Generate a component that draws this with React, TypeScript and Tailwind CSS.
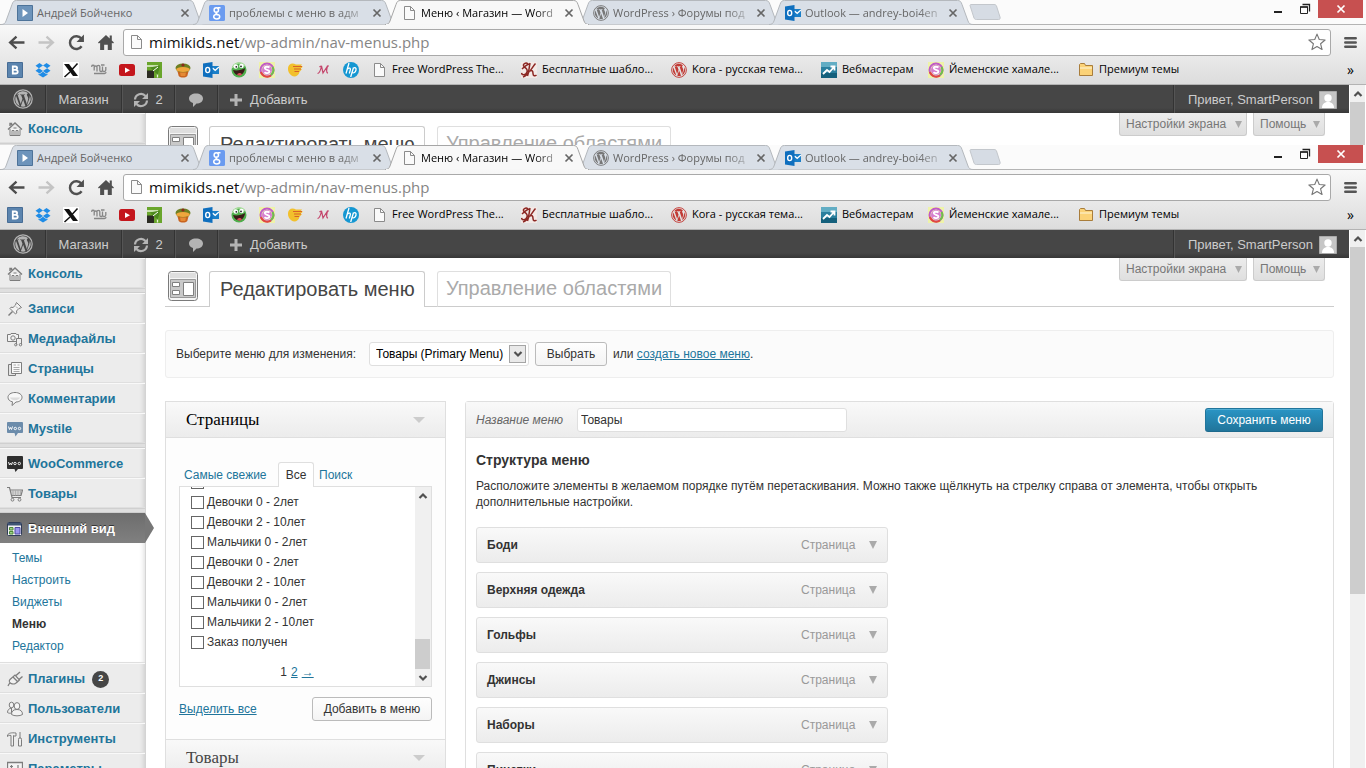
import { useId, type ReactNode } from "react";

type Kids = { children: ReactNode };

/* ---------- small drawing helpers ---------- */

function Icon({ children, className = "size-4", box = "0 0 16 16" }: Kids & { className?: string; box?: string }) {
  return (
    <svg className={"shrink-0 " + className} viewBox={box} fill="none" aria-hidden="true">
      {children}
    </svg>
  );
}

const PageIcon = () => (
  <Icon>
    <path d="M3.5 1.5h6l4 4v9h-10z" fill="#fafafa" stroke="#8b8b8b" />
    <path d="M9.500 1.500v4h4" stroke="#8b8b8b" />
  </Icon>
);

const WordPressMark = ({ className, color }: { className?: string; color: string }) => (
  <Icon className={className} box="0 0 20 20">
    <circle cx="10" cy="10" r="9.200" stroke={color} strokeWidth="1.200" />
    <path
      fill={color}
      d="M2.300 10c0-1.100.25-2.200.68-3.150l3.700 10.100A7.700 7.700 0 0 1 2.300 10zm12.950-.4c0 .7-.27 1.500-.62 2.600l-.8 2.700-2.950-8.750.9-.1c.45-.05.4-.7-.05-.67 0 0-1.330.1-2.180.1-.8 0-2.150-.1-2.150-.1-.45-.03-.5.64-.05.67l.85.1 1.270 3.480-1.780 5.350-2.970-8.830.9-.1c.45-.05.4-.7-.05-.67 0 0-1.150.1-2 .1A7.700 7.700 0 0 1 15.200 4.300c-.95.05-1.330.8-1.330 1.400 0 .7.400 1.280.82 1.960.3.550.56 1.220.56 1.940zm-5.100 1.100 2.370 6.500a7.700 7.700 0 0 1-4.700.1zm6.620-4.300a7.700 7.700 0 0 1-2.900 10.280l2.350-6.800c.5-1.300.65-2.500.55-3.480z"
    />
  </Icon>
);

const PlayTile = () => (
  <Icon>
    <path d="M.5.5h15v15H.5z" fill="#6d94bb" stroke="#4d7399" />
    <path d="M5.500 4v8l5.500-4z" fill="#fff" />
  </Icon>
);

const GoogleTile = () => (
  <Icon>
    <rect width="16" height="16" rx="1.500" fill="#6a9bf0" />
    <g stroke="#fff" strokeWidth="1.500">
      <ellipse cx="7.300" cy="5" rx="2.200" ry="2.300" />
      <ellipse cx="7.700" cy="11.800" rx="3" ry="2.200" />
      <path d="M8.500 2.700h3M8 7.300c-2 .8-.5 1.600.8 2.500" />
    </g>
  </Icon>
);

const OutlookIcon = () => (
  <Icon>
    <path d="M8 4h8v8H8z" fill="#1b7fc8" />
    <path d="m9.500 6 2.700 2.300L16 5" stroke="#fff" strokeWidth="1.300" />
    <path d="M0 1.500 9.500 0v16L0 14.500z" fill="#0f6fbe" />
    <ellipse cx="4.700" cy="8" rx="2" ry="2.600" stroke="#fff" strokeWidth="1.400" />
  </Icon>
);

const SpiralIcon = () => (
  <Icon>
    <path d="M0 0h16v16H0z" fill="#eef3a8" />
    <circle cx="8" cy="8" r="6.500" stroke="#c05ac8" strokeWidth="2" />
    <path d="M2 10a6.500 6.500 0 0 0 10 3.500" stroke="#e2483d" strokeWidth="2" />
    <path d="M13.500 5A6.500 6.500 0 0 1 12 13" stroke="#6fc04a" strokeWidth="2" />
    <circle cx="8" cy="8" r="5" fill="#d67fd0" />
    <path d="M10.500 5.500C9 4.300 5.700 4.400 5.800 6.300c.1 1.700 4.600 1.300 4.600 3.200 0 1.900-3.300 2.200-5 .8" stroke="#fff" strokeWidth="1.900" />
  </Icon>
);

const FolderIcon = () => (
  <Icon>
    <path d="M1.500 13.500v-11l1-1h4l1 2h7v10z" fill="#fbd277" stroke="#a97d3b" />
    <path d="M2 6h12" stroke="#fdeab8" strokeWidth="1.500" />
  </Icon>
);

/* ---------- browser chrome data ---------- */

const tabs = [
  { title: "Андрей Бойченко", icon: <PlayTile /> },
  { title: "проблемы с меню в адм", icon: <GoogleTile />, fade: true },
  { title: "Меню ‹ Магазин — Word", icon: <PageIcon />, active: true, fade: true },
  { title: "WordPress › Форумы под", icon: <WordPressMark className="size-4" color="#777" />, fade: true },
  { title: "Outlook — andrey-boi4en", icon: <OutlookIcon />, fade: true },
];

const quickLinks: { name: string; icon: ReactNode }[] = [
  {
    name: "ВКонтакте",
    icon: (
      <Icon>
        <path d="M.5.5h15v15H.5z" fill="#5b84ae" stroke="#466c95" />
        <path d="M5.800 4.500h2.500c2.400 0 2.400 3.200 0 3.300H6h2.600c2.800 0 2.800 3.700 0 3.700H5.800z" stroke="#fff" strokeWidth="1.800" />
      </Icon>
    ),
  },
  {
    name: "Dropbox",
    icon: (
      <Icon>
        <path d="M4.500 1 8 3.600 3.900 6.300.5 3.700zM11.500 1l4 2.700-3.400 2.600L8 3.600zM.5 8.800l3.400-2.500L8 8.900l-3.500 2.600zM15.500 8.800l-3.400-2.500L8 8.900l3.500 2.600zM8 9.700l3.500 2.600 1-.7v1.200L8 15.500l-4.500-2.700v-1.200l1 .7z" fill="#1f8ce6" />
      </Icon>
    ),
  },
  {
    name: "X",
    icon: (
      <Icon>
        <path d="M0 0h16v16H0z" fill="#fff" />
        <path d="M1 2h5l9 12h-5z" fill="#111" />
        <path d="M14.500 1.500 9 7.500M7 10l-5.500 5" stroke="#111" strokeWidth="1.500" />
      </Icon>
    ),
  },
  {
    name: "mi",
    icon: (
      <Icon>
        <path d="M.8 5V4c0-1 2.400-1 2.400 0v4.500M3.200 5.500c0-2 2.800-2 2.800 0v4M6 4.500C6 3 8.800 3 8.800 4.500v3.800c0 1.600 2.700 1.600 2.700 0V4.500M11.500 8c0 2 3.300 2 3.300 0V5M3 11.500h10.500c1 0 1.500-.7 1.500-1.500M10 3h3.500" stroke="#868686" strokeWidth="1.300" />
      </Icon>
    ),
  },
  {
    name: "YouTube",
    icon: (
      <Icon>
        <rect y="2" width="16" height="12" rx="2.500" fill="#c4161c" />
        <path d="M6 5.500v5.500l5-2.700z" fill="#fff" />
      </Icon>
    ),
  },
  {
    name: "ПриватБанк",
    icon: (
      <Icon>
        <path d="M0 0h15v16H0z" fill="#69a52b" />
        <path d="M0 4h10.500v11.500" stroke="#e8f3da" strokeWidth="1.300" />
        <path d="M0 8.500h7v7.500H0z" fill="#2b2b22" />
        <path d="M3 5.500 13 3.500 11 13z" fill="#4d8a1f" />
        <path d="m11 5-5 4" stroke="#fff" />
      </Icon>
    ),
  },
  {
    name: "Кекс",
    icon: (
      <Icon>
        <path d="M2 7.500h12L12.300 14c-2 2-6.600 2-8.600 0z" fill="#c9641f" />
        <ellipse cx="8" cy="6" rx="7.500" ry="4.500" fill="#6d7f22" />
        <ellipse cx="8" cy="7.500" rx="6.800" ry="2.600" fill="#efa63c" />
        <path d="M5 10.500h6l-.7 3.500H5.700z" fill="#e58a35" />
        <circle cx="8" cy="3" r="1.600" fill="#8b2a1a" />
      </Icon>
    ),
  },
  { name: "Outlook", icon: <OutlookIcon /> },
  {
    name: "Смайл",
    icon: (
      <Icon>
        <circle cx="8" cy="8" r="7.500" fill="#4fae4c" />
        <path d="M1.500 6A7 7 0 0 1 14 4" stroke="#a8dd9b" strokeWidth="1.500" />
        <circle cx="4.800" cy="4.500" r="2.300" fill="#fff" />
        <circle cx="10.500" cy="4" r="2.300" fill="#fff" />
        <circle cx="5.300" cy="4.800" r=".9" fill="#222" />
        <circle cx="10" cy="4.400" r=".9" fill="#222" />
        <path d="M2 8c3.500 1 9 0 12-2-.5 8.500-10 10-12 2z" fill="#3a1b18" />
        <path d="M6 12.500c1.500-2 4-2 5 0-1.500 1.500-3.500 1.500-5 0z" fill="#d9485a" />
      </Icon>
    ),
  },
  { name: "Спираль", icon: <SpiralIcon /> },
  {
    name: "Птица",
    icon: (
      <Icon>
        <path d="M1 6C1.500 2 5 .5 9 2.500h6l-1.500 2H16L13.500 7H15l-2.500 3c-1 4-5 6-8 3.500C2 12 .7 9 1 6z" fill="#f2c02c" />
        <path d="M6 4.500h9M7 7h7M7.500 9.500H12" stroke="#d8632a" strokeWidth="1.100" />
      </Icon>
    ),
  },
  {
    name: "M",
    icon: (
      <Icon>
        <path d="M2.500 11.500c1.500 0 3-2.500 4-7.500l1.500 7 4.500-7c-1 3.500-1.500 7 .5 7.200M4.500 5c.8-.8 1.500-1 2-1M12 4h2" stroke="#c4456b" strokeWidth="1.200" />
      </Icon>
    ),
  },
  {
    name: "HP",
    icon: (
      <Icon>
        <circle cx="8" cy="8" r="8" fill="#1597d2" />
        <path d="M6 1 3 11.500M4.500 7c1.500-1.300 3.300-1 2.800.8l-1 3.700M10.500 5.500 7.700 15M10 6.500c2-1.500 3.500-.8 3 1.500-.5 2.500-2.300 3.300-4 2.500" stroke="#fff" strokeWidth="1.300" />
      </Icon>
    ),
  },
];

const bookmarks: { title: string; width: string; icon: ReactNode }[] = [
  { title: "Free WordPress The...", width: "w-[150px]", icon: <PageIcon /> },
  {
    title: "Бесплатные шабло...",
    width: "w-[150px]",
    icon: (
      <Icon>
        <path d="M0 0h16v16H0z" fill="#f3e9e6" />
        <path d="M7 2C5 0 1 2 3 4.500s4 2 3 5.500-5 3.500-5.500 1M9 1c-1 5-1 9-2.500 13M14.500 1.500C13 3 10 8 9 9c2-1 3 0 3 2.500s2 3 3.500 1.500M1 7c3-3 5-5 8-5M2 15c3-1 5-3 6.500-6" stroke="#8c2723" strokeWidth="1.500" />
      </Icon>
    ),
  },
  { title: "Kora - русская тема...", width: "w-[150px]", icon: <WordPressMark className="size-4" color="#c23b35" /> },
  {
    title: "Вебмастерам",
    width: "w-[107px]",
    icon: (
      <Icon>
        <path d="M0 0h16v16H0z" fill="#2a7f9e" />
        <path d="M0 0h16v5H0z" fill="#62adc4" />
        <path d="M0 11h16v5H0z" fill="#14607c" />
        <path d="m2 12 4-4 2.500 2L13 5M9.500 4.500h4v4" stroke="#fff" strokeWidth="1.800" />
      </Icon>
    ),
  },
  { title: "Йеменские хамале...", width: "w-[150px]", icon: <SpiralIcon /> },
  { title: "Премиум темы", width: "w-[120px]", icon: <FolderIcon /> },
];

/* ---------- browser chrome ---------- */

function Tab({ title, icon, active, fade }: { title: string; icon: ReactNode; active?: boolean; fade?: boolean }) {
  return (
    <div className={"relative -mr-3 flex h-[25px] w-[204px] shrink-0 items-center pt-px pr-[15px] pl-4 " + (active ? "z-10" : "")}>
      <svg className="absolute inset-0 size-full" viewBox="0 0 204 25" preserveAspectRatio="none" fill="none" aria-hidden="true">
        <path
          d="M0 24.500c3 0 4-1 5-3.500L11 4.500C12 1.500 13 .5 15.500 .5h173c2.500 0 3.500 1 4.500 4L199 21c1 2.500 2 3.500 5 3.500"
          fill={active ? "#f8f8f8" : "#d9dfe7"}
          stroke={active ? "#a6a6a6" : "#b4b8bd"}
        />
        {active && <path d="M1 24.500h202" stroke="#f7f7f7" />}
      </svg>
      <a
        href="#tab"
        className={"relative flex min-w-0 flex-1 items-center gap-1 leading-4 " + (active ? "text-black" : "text-[#666]")}
      >
        {icon}
        <span className={"whitespace-nowrap " + (fade ? "[mask-image:linear-gradient(to_right,#000_86%,#0006)]" : "")}>{title}</span>
      </a>
      <button type="button" aria-label="Закрыть вкладку" className="relative size-2.5 shrink-0">
        <Icon className="size-2.5" box="0 0 10 10">
          <path d="m1.500 1.500 7 7m0-7-7 7" stroke="#666" strokeWidth="1.700" />
        </Icon>
      </button>
    </div>
  );
}

function TabStrip() {
  return (
    <div className="flex h-[25px] items-end border-b border-[#b4b4b4] bg-[#fbfbfb] pl-px text-[11px]">
      <div className="-mb-px flex">
        {tabs.map((t) => (
          <Tab key={t.title} {...t} />
        ))}
      </div>
      <button type="button" aria-label="Новая вкладка" className="mb-1 ml-2 h-4 w-8">
        <Icon className="h-4 w-8" box="0 0 32 16">
          <path d="M1 1.500C1 .8 1.500.5 2 .5h23c1.500 0 2 .5 2.500 1.500l3.500 11c.5 1.500 0 2.500-1.500 2.500h-22c-1.500 0-2-.5-2.500-1.500z" fill="#d6dce4" stroke="#c3c7cc" />
        </Icon>
      </button>
      <div className="mr-[3px] ml-auto flex h-[25px] items-start">
        <button type="button" aria-label="Свернуть" className="flex h-[22px] w-[26px] items-center justify-center">
          <Icon className="size-3" box="0 0 12 12">
            <path d="M2 8h8" stroke="#222" strokeWidth="2" />
          </Icon>
        </button>
        <button type="button" aria-label="Развернуть" className="flex h-[19px] w-[27px] items-center justify-center">
          <Icon className="size-3" box="0 0 12 12">
            <path d="M1.500 4h7v6.500h-7z" stroke="#222" />
            <path d="M1 4h8M3.500 1.500h7v7" stroke="#222" strokeWidth="1.300" />
          </Icon>
        </button>
        <button type="button" aria-label="Закрыть" className="flex h-[19px] w-[45px] items-center justify-center bg-[#c75050]">
          <Icon className="size-2.5" box="0 0 10 10">
            <path d="m1.500 1.500 7 7m0-7-7 7" stroke="#fff" strokeWidth="1.700" />
          </Icon>
        </button>
      </div>
    </div>
  );
}

function Toolbar({ id }: { id: string }) {
  return (
    <div className="flex h-8 items-center pt-0.5 pr-2 pl-2">
      <div className="flex w-[115px] gap-[13px]">
        <button type="button" aria-label="Назад">
          <Icon className="size-[17px]">
            <path d="M15.500 8H2.500M8 2.500 2 8l6 5.500" stroke="#4d4d4d" strokeWidth="2.200" />
          </Icon>
        </button>
        <button type="button" aria-label="Вперёд">
          <Icon className="size-[17px]">
            <path d="M.5 8h13M8 2.500 14 8l-6 5.500" stroke="#c4c4c4" strokeWidth="2.200" />
          </Icon>
        </button>
        <button type="button" aria-label="Обновить">
          <Icon className="size-[17px]">
            <path d="M12.800 11.500A6 6 0 1 1 12.500 4.300" stroke="#505050" strokeWidth="2.300" />
            <path d="M15 .5v7H8z" fill="#505050" />
          </Icon>
        </button>
        <button type="button" aria-label="Домой">
          <Icon className="size-[17px]">
            <path d="M7.500 1 0 8l.8 1L2 8.200V15h3.800v-5h3.400v5H13V8.200l1.200.8.800-1-2-2V1.500h-2v2.700z" fill="#505050" />
          </Icon>
        </button>
      </div>
      <div className="flex h-[27px] min-w-0 flex-1 items-center rounded-[3px] border border-[#a9a9a9] bg-white pr-1 pl-1">
        <PageIcon />
        <label htmlFor={id + "url"} className="sr-only">
          Адрес
        </label>
        <div className="relative ml-[5px] flex h-6 flex-1 items-center text-[15px]">
          <span aria-hidden="true" className="pointer-events-none whitespace-pre text-[#858585]">
            <span className="text-[#111]">mimikids.net</span>/wp-admin/nav-menus.php
          </span>
          <input
            id={id + "url"}
            type="url"
            className="absolute inset-0 size-full bg-transparent text-transparent outline-none"
          />
        </div>
        <button type="button" aria-label="В закладки">
          <Icon className="size-[18px]">
            <path d="m8 1 2 4.800 5.200.4-4 3.400 1.300 5.100L8 12l-4.500 2.700 1.300-5.100-4-3.400L6 5.800z" stroke="#777" strokeLinejoin="round" />
          </Icon>
        </button>
      </div>
      <button type="button" aria-label="Меню браузера" className="ml-3">
        <Icon className="size-[15px]">
          <path d="M2.500 3.500h11M2.500 8h11M2.500 12.500h11" stroke="#555" strokeWidth="2.800" strokeLinecap="round" />
        </Icon>
      </button>
    </div>
  );
}

function BookmarksBar() {
  return (
    <nav className="flex h-[28px] items-center border-b border-[#b3b3b3] pr-3 pb-0.5 pl-[7px] text-[11px] text-black">
      <div className="flex w-[364px] shrink-0 gap-3">
        {quickLinks.map((q, i) => (
          <a key={i} href="#bookmark" aria-label={q.name}>
            {q.icon}
          </a>
        ))}
      </div>
      {bookmarks.map((b) => (
        <a key={b.title} href="#bookmark" className={"flex shrink-0 items-center gap-[5px] whitespace-nowrap " + b.width}>
          {b.icon}
          {b.title}
        </a>
      ))}
      <button type="button" className="ml-auto text-[14px]">
        »
      </button>
    </nav>
  );
}

/* ---------- WordPress admin ---------- */

const divider = "border-r border-[#333] shadow-[1px_0_0_#555]";

function AdminBar() {
  return (
    <div className="flex h-7 items-stretch bg-[linear-gradient(to_top,#373737_0,#464646_5px)] text-[13px] text-[#ccc]">
      <a href="#wp" aria-label="О WordPress" className={"flex w-[46px] items-center justify-center " + divider}>
        <WordPressMark className="size-5" color="#b4b4b4" />
      </a>
      <a href="#site" className={"flex w-[76px] items-center justify-center pt-0.5 " + divider}>
        Магазин
      </a>
      <a href="#updates" className={"flex w-[53px] items-center justify-center gap-1.5 pt-0.5 " + divider}>
        <Icon>
          <path d="M2 7.500A6 6 0 0 1 12.500 4M14 8.500A6 6 0 0 1 3.500 12" stroke="#b4b4b4" strokeWidth="2.200" />
          <path d="M15 1v6H9zM1 15V9h6z" fill="#b4b4b4" />
        </Icon>
        2
      </a>
      <a href="#comments" aria-label="Комментарии" className={"flex w-[43px] items-center justify-center pt-0.5 " + divider}>
        <Icon>
          <path d="M8 1.500c4 0 7 2 7 5s-2.800 5-6.500 5L5 15v-4C2.500 10.300 1 8.700 1 6.500c0-3 3-5 7-5z" fill="#b4b4b4" />
        </Icon>
      </a>
      <a href="#new" className="flex items-center gap-2 pt-0.5 pl-3">
        <Icon className="size-3" box="0 0 12 12">
          <path d="M6 0v12M0 6h12" stroke="#b4b4b4" strokeWidth="3" />
        </Icon>
        Добавить
      </a>
      <a
        href="#profile"
        className="ml-auto flex w-[175px] items-center justify-end gap-1.5 border-l border-[#555] pt-0.5 pr-3 shadow-[-1px_0_0_#333]"
      >
        Привет, SmartPerson
        <Icon className="size-[18px]" box="0 0 18 18">
          <path d="M.5.5h17v17H.5z" fill="#c6c6c6" stroke="#aaa" />
          <circle cx="9" cy="7" r="3.700" fill="#fff" />
          <path d="M3 17c0-4 2-5.500 6-6.500 4 1 6 2.500 6 6.500z" fill="#fff" />
        </Icon>
      </a>
    </div>
  );
}

const g = "#7d7d7d";

const menuIcons = {
  home: (
    <Icon>
      <path d="M3 8v6.500h10V8" fill="#f6f6f6" stroke={g} />
      <path d="M1 8.500 8 2l7 6.500M3 5V2.500h1.500V4" stroke={g} strokeWidth="1.400" />
      <path d="M5 14V9.500h2V14M9 14V9.500h2V14M6.500 7h3" stroke={g} />
    </Icon>
  ),
  pin: (
    <Icon>
      <path d="m9.500 1.500 5 5-1.500.7-1 .2L9.500 10l.3 2-1.300 1L3 7.500 4 6.200l2 .3L8.600 4l.2-1z" fill="#f3f3f3" stroke={g} />
      <path d="m5.500 10.500-4 4" stroke={g} strokeWidth="1.400" />
      <path d="m9 5.500 2 2" stroke="#aaa" />
    </Icon>
  ),
  media: (
    <Icon>
      <path d="M.5 3.500h3l.5-1h5l.5 1h2v7H.5z" fill="#f3f3f3" stroke={g} />
      <circle cx="6" cy="7" r="2.200" stroke={g} />
      <path d="M9.500 13.500V7.500h5v6" fill="#eee" stroke={g} />
      <circle cx="8.800" cy="13.700" r="1.200" stroke={g} />
      <circle cx="13.500" cy="13.700" r="1.200" stroke={g} />
    </Icon>
  ),
  pages: (
    <Icon>
      <path d="M1.500 3.500h7v11h-7z" fill="#e4e4e4" stroke={g} />
      <path d="M4.500 1.500h10v11h-10z" fill="#f8f8f8" stroke={g} />
      <path d="M6.500 4h2.500M10.500 4h2M6.500 6.500h6M6.500 8.500h6M6.500 10.500h6" stroke="#aaa" />
    </Icon>
  ),
  comment: (
    <Icon>
      <path d="M8 1.500c4 0 7 2 7 4.800s-2.800 4.700-6 4.700L5 14.500l.5-3.700C2.800 10.300 1 8.700 1 6.300c0-2.800 3-4.800 7-4.800z" fill="#f7f7f7" stroke={g} />
      <path d="M3 6.500c1 3.500 9 3.500 10 0z" fill="#dcdcdc" />
    </Icon>
  ),
  woo: (
    <Icon>
      <path d="M1 1h14c.5 0 1 .5 1 1v9c0 .5-.5 1-1 1h-4L8.500 15.500 7.500 12H1c-.5 0-1-.5-1-1V2c0-.5.5-1 1-1z" fill="#6c8cab" />
      <path d="m1.500 5.500 1 3 1-2 1 2 1-3M9.500 7.500a1.200 1.200 0 1 0-2.400 0 1.200 1.200 0 0 0 2.400 0zM13.700 7.500a1.200 1.200 0 1 0-2.400 0 1.200 1.200 0 0 0 2.400 0z" stroke="#fff" />
    </Icon>
  ),
  wooDark: (
    <Icon>
      <path d="M1 0h14c.5 0 1 .5 1 1v11c0 .5-.5 1-1 1h-4l-2.500 3-1-3H1c-.5 0-1-.5-1-1V1c0-.5.5-1 1-1z" fill="#2e2e2e" />
      <path d="m1.500 6 1 3 1-2 1 2 1-3M9.200 7.500a1.200 1.200 0 1 0-2.400 0 1.200 1.200 0 0 0 2.400 0zM13.500 7.500a1.200 1.200 0 1 0-2.400 0 1.200 1.200 0 0 0 2.400 0z" stroke="#eee" />
    </Icon>
  ),
  cart: (
    <Icon>
      <path d="M0 1.500h2.500L5 11.500h9M3 4h12.500L14 9.500H4.500" stroke={g} strokeWidth="1.200" />
      <path d="M4 6h10.500M4.500 8h9.500M6 4v5.500M8.500 4v5.500M11 4v5.500M13.500 4v5" stroke="#aaa" strokeWidth=".8" />
      <circle cx="5.500" cy="13.700" r="1.400" stroke={g} />
      <circle cx="12.500" cy="13.700" r="1.400" stroke={g} />
    </Icon>
  ),
  look: (
    <Icon>
      <rect x=".5" y="1.500" width="14" height="13" rx="1" fill="#f2f2f2" stroke="#2f3c58" />
      <path d="M1 2h13v2.500H1z" fill="#3f5474" />
      <path d="M2.500 6.500h3.500v2.500h-3.500zM2.500 10.500h3.500v2.500h-3.500z" fill="#9fd08a" stroke="#4c8a38" />
      <path d="M8 6.500h5v6.500h-5z" fill="#9a94ee" stroke="#4e4aa0" />
    </Icon>
  ),
  plug: (
    <Icon>
      <path d="M1 15c1-2 1-2.500 2.500-3.500M3 8.500 8 4l4.500 5-4 3.500c-2 1-5 .5-6-1.500-.4-1 0-2 .5-2.500z" fill="#f1f1f1" stroke={g} strokeWidth="1.200" />
      <path d="m9 4.500 4-3.500M12 8.500l3.500-3M6 6l5 5" stroke={g} strokeWidth="1.400" />
    </Icon>
  ),
  users: (
    <Icon>
      <ellipse cx="4.500" cy="4" rx="2.300" ry="2.800" fill="#f2f2f2" stroke={g} />
      <path d="M4.500 7C2 7.500.5 9 .5 11.500c1.500 1 3 .8 4 .5z" fill="#eee" stroke={g} />
      <ellipse cx="10" cy="5" rx="2.800" ry="3.400" fill="#f6f6f6" stroke={g} />
      <path d="M4.500 13.500c0-3.500 2-5 5.500-5s5.500 1.500 5.500 5c-2.500 1.800-8.500 1.800-11 0z" fill="#f2f2f2" stroke={g} />
    </Icon>
  ),
  tools: (
    <Icon>
      <path d="M.5 4C2 2 4 1.500 9 2v3H7l-.5-.5V15H4V4.500c-1.500-.5-2.500 0-3.500 1z" fill="#eee" stroke={g} />
      <path d="M13 1v6M11.500 15V8.500l.5-1.500h2l.5 1.500V15z" fill="#eee" stroke={g} />
    </Icon>
  ),
  settings: (
    <Icon>
      <path d="M.5 1.500h15v14H.5z" fill="#f4f4f4" stroke={g} strokeWidth="1.300" />
      <path d="M4.500 4v9M3 5.500h3M3 10h3M11 4v9M9.500 7.500h3M9 11h4" stroke={g} strokeWidth="1.200" />
    </Icon>
  ),
};

type MenuEntry = { label: string; icon: ReactNode; count?: number };

const topGroups: MenuEntry[][] = [
  [{ label: "Консоль", icon: menuIcons.home }],
  [
    { label: "Записи", icon: menuIcons.pin },
    { label: "Медиафайлы", icon: menuIcons.media },
    { label: "Страницы", icon: menuIcons.pages },
    { label: "Комментарии", icon: menuIcons.comment },
    { label: "Mystile", icon: menuIcons.woo },
  ],
  [
    { label: "WooCommerce", icon: menuIcons.wooDark },
    { label: "Товары", icon: menuIcons.cart },
  ],
];

const lowerGroup: MenuEntry[] = [
  { label: "Плагины", icon: menuIcons.plug, count: 2 },
  { label: "Пользователи", icon: menuIcons.users },
  { label: "Инструменты", icon: menuIcons.tools },
  { label: "Параметры", icon: menuIcons.settings },
];

const submenu = ["Темы", "Настроить", "Виджеты", "Меню", "Редактор"];

function SidebarItem({ label, icon, count }: MenuEntry) {
  return (
    <li>
      <a
        href="#admin"
        className="flex h-[30px] items-center gap-[5px] border-t border-b border-t-[#f9f9f9] border-b-[#dfdfdf] pt-0.5 pl-[7px] font-bold text-[#21759b]"
      >
        {icon}
        {label}
        {count && (
          <span className="ml-0.5 flex size-[17px] items-center justify-center rounded-full bg-[#464646] text-[9px] text-white">{count}</span>
        )}
      </a>
    </li>
  );
}

function Sidebar() {
  return (
    <nav className="w-[146px] shrink-0 border-r border-[#d4d4d4] bg-[#ececec] text-[13px] shadow-[inset_-5px_0_5px_-4px_rgba(0,0,0,0.15)]">
      {topGroups.map((group, i) => (
        <div key={i}>
          <ul>
            {group.map((m) => (
              <SidebarItem key={m.label} {...m} />
            ))}
          </ul>
          <div className="h-[5px] border-t border-b border-t-[#d0d0d0] border-b-[#cfcfcf] bg-[#dfdfdf]" />
        </div>
      ))}
      <a
        href="#appearance"
        className="relative flex h-[30px] items-center gap-[5px] bg-linear-to-b from-[#6d6d6d] to-[#808080] pt-0.5 pl-[7px] font-bold text-white [text-shadow:0_-1px_0_#333]"
      >
        {menuIcons.look}
        Внешний вид
        <svg className="absolute top-0 left-full h-[30px] w-[9px]" viewBox="0 0 9 30" aria-hidden="true">
          <path d="M0 0 9 15 0 30z" fill="#777" />
        </svg>
      </a>
      <ul className="h-[119px] bg-white pt-1 pl-3 text-[12px] leading-[22px] shadow-[inset_-5px_0_5px_-4px_rgba(0,0,0,0.15)]">
        {submenu.map((s) => (
          <li key={s}>
            <a href="#sub" className={s === "Меню" ? "font-bold text-[#333]" : "text-[#21759b]"}>
              {s}
            </a>
          </li>
        ))}
      </ul>
      <ul className="border-t border-[#dfdfdf]">
        {lowerGroup.map((m) => (
          <SidebarItem key={m.label} {...m} />
        ))}
      </ul>
    </nav>
  );
}

const Triangle = ({ className = "size-2" }: { className?: string }) => (
  <svg className={"shrink-0 " + className} viewBox="0 0 8 8" preserveAspectRatio="none" aria-hidden="true">
    <path d="M0 0h8L4 8z" fill="currentColor" />
  </svg>
);

const Chevron = ({ up = false, className = "size-2.5" }: { up?: boolean; className?: string }) => (
  <Icon className={className} box="0 0 10 10">
    <path d={up ? "M1.500 7 5 3.500 8.500 7" : "M1.500 3 5 6.500 8.500 3"} stroke="#505050" strokeWidth="2.200" />
  </Icon>
);

function ScreenMetaButton({ children, width }: Kids & { width: string }) {
  return (
    <button
      type="button"
      className={
        "flex h-[23px] items-center justify-between rounded-b-[3px] border border-t-0 border-[#ccc] bg-linear-to-b from-[#ececec] to-[#dfdfdf] pr-1 pl-1.5 text-[12px] text-[#777] " +
        width
      }
    >
      {children}
      <Triangle className="size-[7px] text-[#aaa]" />
    </button>
  );
}

function PageHeader() {
  return (
    <header className="flex h-[49px] items-end border-b border-[#ccc] pl-[3px]">
      <Icon className="mb-1 size-[31px]" box="0 0 31 31">
        <rect x=".5" y=".5" width="29" height="29" rx="3" fill="#f5f5f5" stroke="#7a7a7a" />
        <path d="M2 2h26v5H2z" fill="#dedede" />
        <path d="M2.500 8.500h25v18h-25z" fill="#c9c9c9" stroke="#999" />
        <path d="M4.500 11.500h7v4h-7zM4.500 19.500h7v4h-7zM15.500 11.500h10v13h-10z" fill="#fff" stroke="#808080" />
      </Icon>
      <h1 className="ml-[10px] -mb-px flex h-9 w-[216px] items-center rounded-t-[3px] border border-b-0 border-[#ccc] bg-white pb-0.5 pl-2.5 text-[20px] whitespace-nowrap text-[#464646]">
        Редактировать меню
      </h1>
      <a
        href="#locations"
        className="ml-3 -mb-px flex h-9 w-[234px] items-center justify-center rounded-t-[3px] border border-[#dfdfdf] border-b-[#ccc] pb-0.5 text-[20px] whitespace-nowrap text-[#aaa]"
      >
        Управление областями
      </a>
      <div className="mr-[9px] ml-auto flex gap-1.5 self-start">
        <ScreenMetaButton width="w-[128px]">Настройки экрана</ScreenMetaButton>
        <ScreenMetaButton width="w-[72px]">Помощь</ScreenMetaButton>
      </div>
    </header>
  );
}

const button = "h-6 rounded-[3px] border border-[#bbb] bg-linear-to-b from-[#fefefe] to-[#f4f4f4] text-[12px] text-[#333]";

function MenuChooser({ id }: { id: string }) {
  return (
    <form className="mt-[23px] flex h-12 items-center rounded-[3px] border border-[#eee] bg-[#fbfbfb] px-2.5">
      <label htmlFor={id + "menu"} className="w-[193px]">
        Выберите меню для изменения:
      </label>
      <div className="relative w-[160px]">
        <select id={id + "menu"} className="h-6 w-full appearance-none rounded-[3px] border border-[#dfdfdf] bg-white pl-1.5 text-[12px] text-black">
          <option>Товары (Primary Menu)</option>
        </select>
        <span className="pointer-events-none absolute top-[3px] right-[3px] flex h-[18px] w-[17px] items-center justify-center border border-[#a5a5a5] bg-[#e9e9e9]">
          <Chevron />
        </span>
      </div>
      <button type="button" className={"mr-1.5 ml-1.5 w-[72px] " + button}>
        Выбрать
      </button>
      <span>
        или{" "}
        <a href="#create" className="text-[#21759b] underline">
          создать новое меню
        </a>
        .
      </span>
    </form>
  );
}

const pages = [
  "Мальчики 2 - 10лет",
  "Девочки 0 - 2лет",
  "Девочки 2 - 10лет",
  "Мальчики 0 - 2лет",
  "Девочки 0 - 2лет",
  "Девочки 2 - 10лет",
  "Мальчики 0 - 2лет",
  "Мальчики 2 - 10лет",
  "Заказ получен",
];

const bar = "bg-linear-to-b from-[#f9f9f9] to-[#ececec]";

function SectionTitle({ children, open }: Kids & { open?: boolean }) {
  return (
    <h3 className={"flex h-9 items-center justify-between border-b border-[#dfdfdf] pr-5 pl-5 " + bar}>
      <button type="button" className={"font-['Liberation_Serif',Georgia,serif] text-[17px] " + (open ? "text-black" : "text-[#464646]")}>
        {children}
      </button>
      <Triangle className="h-1.5 w-3 text-[#ccc]" />
    </h3>
  );
}

function PagesBox() {
  return (
    <section className="w-[281px] shrink-0 self-start border border-[#dfdfdf] bg-[#fdfdfd]">
      <SectionTitle open>Страницы</SectionTitle>
      <div className="px-[13px] pt-6 pb-[18px]">
        <div className="flex h-[25px] items-center text-[#21759b]">
          <a href="#recent" className="w-[99px] pl-[5px]">
            Самые свежие
          </a>
          <a
            href="#all"
            className="relative z-10 flex h-[25px] w-9 items-center justify-center rounded-t-[3px] border border-b-0 border-[#dfdfdf] bg-white text-[#333]"
          >
            Все
          </a>
          <a href="#search" className="px-[5px]">
            Поиск
          </a>
        </div>
        <div className="-mt-px flex h-[201px] border border-[#dfdfdf] bg-white">
          <div className="flex min-w-0 flex-1 flex-col justify-end overflow-hidden pb-1 pl-[11px]">
            {pages.map((p, i) => (
              <label key={i} className="flex h-5 shrink-0 items-center gap-[3px]">
                <input type="checkbox" className="size-[13px] appearance-none border border-[#666] bg-white" />
                {p}
              </label>
            ))}
            <div className="mt-2.5 flex h-5 shrink-0 items-center justify-center gap-1 pr-3">
              <span>1</span>
              <a href="#p2" className="text-[#21759b] underline">
                2
              </a>
              <a href="#next" className="text-[#21759b] underline">
                →
              </a>
            </div>
          </div>
          <div className="flex w-4 shrink-0 flex-col items-center bg-[#f0f0f0]">
            <span className="flex h-[17px] items-center">
              <Chevron up />
            </span>
            <span className="mt-auto h-[30px] w-[15px] self-start bg-[#cdcdcd]" />
            <span className="flex h-[17px] items-center">
              <Chevron />
            </span>
          </div>
        </div>
        <div className="mt-2.5 flex items-center justify-between">
          <a href="#select-all" className="text-[#21759b] underline">
            Выделить все
          </a>
          <button type="button" className={"w-[120px] " + button}>
            Добавить в меню
          </button>
        </div>
      </div>
      <div className="border-t border-[#dfdfdf]">
        <SectionTitle>Товары</SectionTitle>
      </div>
    </section>
  );
}

const structure = ["Боди", "Верхняя одежда", "Гольфы", "Джинсы", "Наборы", "Пинетки"];

function MenuEditor({ id }: { id: string }) {
  return (
    <section className="min-w-0 flex-1 rounded-t-[3px] border border-[#dfdfdf] bg-white">
      <div className={"flex h-9 items-center border-b border-[#dfdfdf] px-2.5 " + bar}>
        <label htmlFor={id + "name"} className="w-[101px] text-[#666] italic">
          Название меню
        </label>
        <input
          id={id + "name"}
          defaultValue="Товары"
          className="h-6 w-[270px] rounded-[3px] border border-[#dfdfdf] bg-white px-[3px] text-[12px] text-[#333]"
        />
        <button
          type="button"
          className="ml-auto h-6 w-[118px] rounded-[3px] border border-[#21759b] border-b-[#1e6a8d] bg-linear-to-b from-[#2a95c5] to-[#21759b] text-[12px] text-white shadow-[inset_0_1px_0_rgba(120,200,230,0.5)]"
        >
          Сохранить меню
        </button>
      </div>
      <div className="px-2.5 pt-3.5">
        <h2 className="text-[14px] leading-4 font-bold">Структура меню</h2>
        <p className="mt-2.5 leading-4">
          Расположите элементы в желаемом порядке путём перетаскивания. Можно также щёлкнуть на стрелку справа от элемента, чтобы открыть
          дополнительные настройки.
        </p>
        <ul className="mt-[17px] flex w-[412px] flex-col gap-[9px]">
          {structure.map((s) => (
            <li key={s} className={"flex h-9 items-center rounded-[3px] border border-[#dfdfdf] px-2.5 " + bar}>
              <span className="flex-1 font-bold">{s}</span>
              <span className="w-[68px] text-[#999]">Страница</span>
              <Triangle className="size-2 text-[#aaa]" />
            </li>
          ))}
        </ul>
      </div>
    </section>
  );
}

function BrowserWindow() {
  const id = useId();
  return (
    <div className="flex min-h-full flex-col bg-white">
      <div className="font-['Open_Sans','Noto_Sans',sans-serif]">
        <TabStrip />
        <div className="bg-linear-to-b from-[#f8f8f8] to-[#dcdcdc]">
          <Toolbar id={id} />
          <BookmarksBar />
        </div>
      </div>
      <div className="flex flex-1">
        <div className="flex min-w-0 flex-1 flex-col">
          <AdminBar />
          <div className="flex flex-1">
            <Sidebar />
            <main className="min-w-0 flex-1 pr-[15px] pl-[19px] text-[12px] text-[#333]">
              <PageHeader />
              <MenuChooser id={id} />
              <div className="mt-[23px] flex gap-[19px]">
                <PagesBox />
                <MenuEditor id={id} />
              </div>
            </main>
          </div>
        </div>
        <div className="mr-px ml-px flex w-[15px] shrink-0 flex-col items-center bg-[#f0f0f0]">
          <span className="flex h-[17px] items-center">
            <Chevron up />
          </span>
          <span className="h-[347px] w-full bg-[#cdcdcd]" />
        </div>
      </div>
    </div>
  );
}

export default function App() {
  return (
    <div className="flex h-screen flex-col overflow-hidden bg-white font-['Liberation_Sans',Arial,sans-serif]">
      <div className="h-[145px] shrink-0 overflow-hidden">
        <BrowserWindow />
      </div>
      <div className="min-h-0 flex-1 overflow-hidden">
        <BrowserWindow />
      </div>
    </div>
  );
}
